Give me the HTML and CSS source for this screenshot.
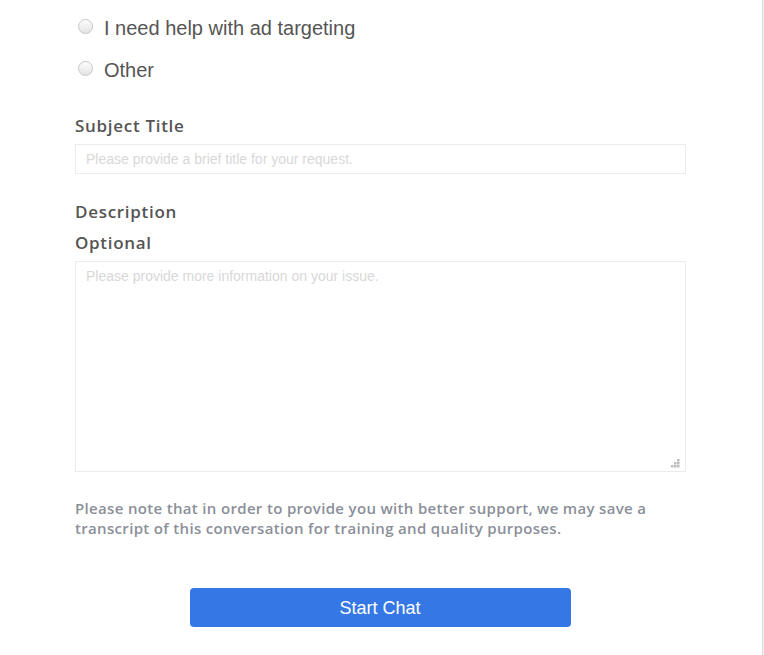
FILE: index.html
```html
<!DOCTYPE html>
<html>
<head>
<meta charset="utf-8">
<link rel="stylesheet" href="styles.css">
</head>
<body>
<div class="page">
  <form class="form">
    <div class="options">
      <label class="option"><span class="radio"></span><span class="option-text">I need help with ad targeting</span></label>
      <label class="option"><span class="radio"></span><span class="option-text">Other</span></label>
    </div>
    <div class="field field-subject">
      <div class="label">Subject Title</div>
      <div class="input"><span class="placeholder">Please provide a brief title for your request.</span></div>
    </div>
    <div class="field field-desc">
      <div class="label">Description</div>
      <div class="label label-opt">Optional</div>
      <div class="textarea">
        <span class="placeholder">Please provide more information on your issue.</span>
        <svg class="grip" width="9" height="9" viewBox="0 0 9 9"><rect x="6" y="0" width="2.5" height="2.5" fill="#bcbcbc"/><rect x="3" y="3" width="2.5" height="2.5" fill="#bcbcbc"/><rect x="6" y="3" width="2.5" height="2.5" fill="#bcbcbc"/><rect x="0" y="6" width="2.5" height="2.5" fill="#bcbcbc"/><rect x="3" y="6" width="2.5" height="2.5" fill="#bcbcbc"/><rect x="6" y="6" width="2.5" height="2.5" fill="#bcbcbc"/></svg>
      </div>
    </div>
    <p class="note">Please note that in order to provide you with better support, we may save a transcript of this conversation for training and quality purposes.</p>
    <div class="actions">
      <button type="button" class="btn">Start Chat</button>
    </div>
  </form>
  <div class="divider"></div>
</div>
</body>
</html>
```
FILE: styles.css
```css
html, body {
  margin: 0;
  padding: 0;
  background: #fff;
}
.page {
  display: flex;
  width: 764px;
  height: 655px;
  overflow: hidden;
}
.form {
  flex: 0 0 611px;
  margin-left: 75px;
  display: flex;
  flex-direction: column;
}
.divider {
  margin-left: 76px;
  width: 1px;
  background: #dcdce0;
  border-right: 1px solid #f0f0f3;
}
.options {
  display: flex;
  flex-direction: column;
  padding-top: 7px;
}
.option {
  display: flex;
  align-items: center;
  height: 42px;
  padding-left: 3px;
}
.radio {
  width: 15px;
  height: 15px;
  box-sizing: border-box;
  border-radius: 50%;
  border: 1px solid #c6c6c6;
  background: linear-gradient(#fdfdfd, #e4e4e4);
  margin-right: 11px;
  margin-top: -4px;
}
.option-text {
  font-family: "Liberation Sans", Arial, sans-serif;
  font-size: 20px;
  color: #555;
}
.label {
  font-family: "Open Sans", sans-serif;
  font-weight: 600;
  font-size: 17px;
  letter-spacing: 0.7px;
  color: #555;
  line-height: 31px;
}
.field-subject {
  margin-top: 19px;
}
.field-subject .label {
  margin-bottom: 3px;
}
.input {
  height: 30px;
  box-sizing: border-box;
  border: 1px solid #ebebeb;
  display: flex;
  align-items: center;
  padding-left: 10px;
}
.placeholder {
  font-family: "Liberation Sans", Arial, sans-serif;
  font-size: 14px;
  color: #d8d8d8;
}
.field-desc {
  margin-top: 22px;
}
.label-opt {
  margin-bottom: 3px;
}
.textarea {
  position: relative;
  height: 211px;
  box-sizing: border-box;
  border: 1px solid #ebebeb;
  padding: 5px 10px;
}
.grip {
  position: absolute;
  right: 5px;
  bottom: 3px;
}
.note {
  margin: 26px 0 0;
  font-family: "Open Sans", sans-serif;
  font-weight: 600;
  font-size: 15px;
  letter-spacing: 0.33px;
  line-height: 20px;
  color: #8b8f99;
}
.actions {
  display: flex;
  justify-content: center;
  margin-top: 50px;
}
.btn {
  width: 381px;
  height: 39px;
  border: none;
  border-radius: 4px;
  background: #3578e5;
  color: #fff;
  font-family: "Liberation Sans", Arial, sans-serif;
  font-size: 18px;
  padding: 2px 0 0;
  margin-right: 1px;
}
```
